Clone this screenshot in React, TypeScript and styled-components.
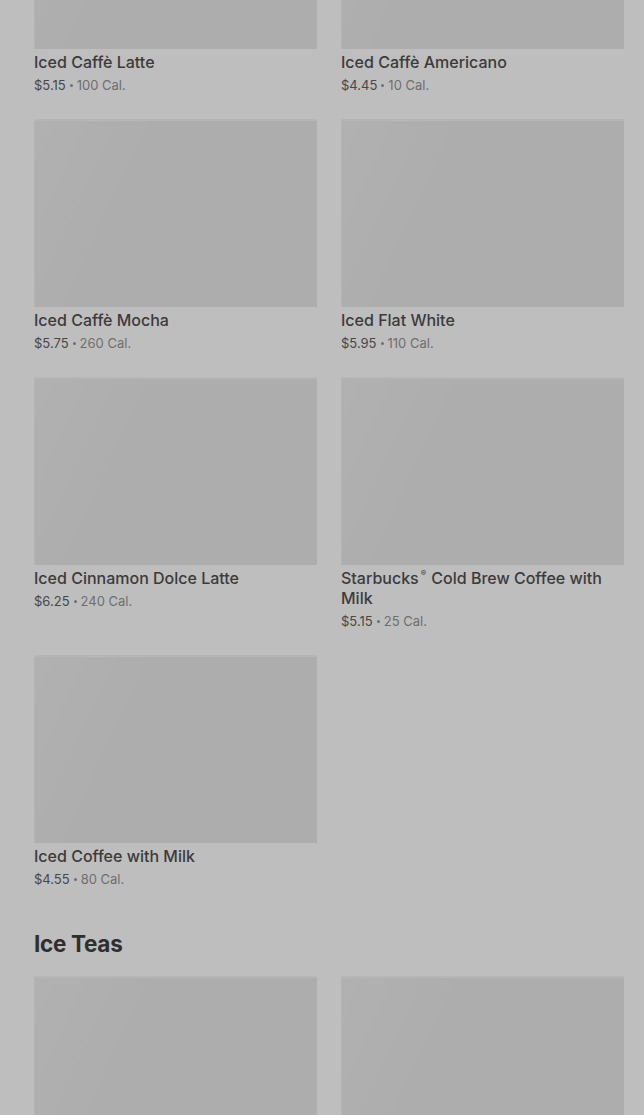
import React from 'react';
import styled, { createGlobalStyle } from 'styled-components';

const GlobalStyle = createGlobalStyle`
  html, body {
    margin: 0;
    padding: 0;
    background: #bebebe;
    overflow: hidden;
  }
  body {
    font-family: Inter, "Liberation Sans", Arial, sans-serif;
  }
`;

const Page = styled.div`
  width: 644px;
  height: 1115px;
  overflow: hidden;
  background: #bebebe;
`;

// the list is scrolled; the first row is partly above the view
const Content = styled.div`
  margin-top: -139px;
  padding: 0 20px 0 34px;
`;

const Grid = styled.div`
  display: grid;
  grid-template-columns: 283px 283px;
  column-gap: 24px;
  row-gap: 24px;
  align-items: start;
`;

const Card = styled.div`
  display: flex;
  flex-direction: column;
`;

const Thumb = styled.div`
  height: 188px;
  box-sizing: border-box;
  border-top: 2px solid #b6b6b6;
  border-left: 1px solid #b4b4b4;
  background:
    linear-gradient(115deg, rgba(255, 255, 255, 0.05) 0%, rgba(255, 255, 255, 0) 35%),
    #adadad;
`;

const Title = styled.div`
  margin-top: 3px;
  font-size: 16px;
  line-height: 20px;
  font-weight: 500;
  color: #3b3b3b;
`;

const Reg = styled.span`
  display: inline-block;
  vertical-align: top;
  font-size: 8px;
  line-height: 11px;
  margin: 0 1px 0 2px;
`;

const Meta = styled.div`
  margin-top: 3px;
  font-size: 13px;
  line-height: 20px;
  color: #474747;
  display: flex;
  align-items: center;
`;

const Cal = styled.span`
  color: #6e6e6e;
`;

const Dot = styled.span`
  display: inline-block;
  width: 3px;
  height: 3px;
  border-radius: 50%;
  background: #707070;
  margin: 1px 4px 0;
`;

const SectionTitle = styled.h2`
  margin: 39px 0 16px;
  font-size: 22.5px;
  line-height: 32px;
  font-weight: 700;
  color: #2f2f2f;
  letter-spacing: -0.3px;
`;

type Item = { name: React.ReactNode; price: string; cal: string };

const coffees: Item[] = [
  { name: 'Iced Caffè Latte', price: '$5.15', cal: '100 Cal.' },
  { name: 'Iced Caffè Americano', price: '$4.45', cal: '10 Cal.' },
  { name: 'Iced Caffè Mocha', price: '$5.75', cal: '260 Cal.' },
  { name: 'Iced Flat White', price: '$5.95', cal: '110 Cal.' },
  { name: 'Iced Cinnamon Dolce Latte', price: '$6.25', cal: '240 Cal.' },
  {
    name: (
      <>
        Starbucks<Reg>®</Reg> Cold Brew Coffee with Milk
      </>
    ),
    price: '$5.15',
    cal: '25 Cal.',
  },
  { name: 'Iced Coffee with Milk', price: '$4.55', cal: '80 Cal.' },
];

function ProductCard({ item }: { item: Item }) {
  return (
    <Card>
      <Thumb />
      <Title>{item.name}</Title>
      <Meta>
        {item.price}
        <Dot />
        <Cal>{item.cal}</Cal>
      </Meta>
    </Card>
  );
}

export default function App() {
  return (
    <Page>
      <GlobalStyle />
      <Content>
        <Grid>
          {coffees.map((c, i) => (
            <ProductCard key={i} item={c} />
          ))}
        </Grid>
        <SectionTitle>Ice Teas</SectionTitle>
        <Grid>
          <Card>
            <Thumb />
          </Card>
          <Card>
            <Thumb />
          </Card>
        </Grid>
      </Content>
    </Page>
  );
}
